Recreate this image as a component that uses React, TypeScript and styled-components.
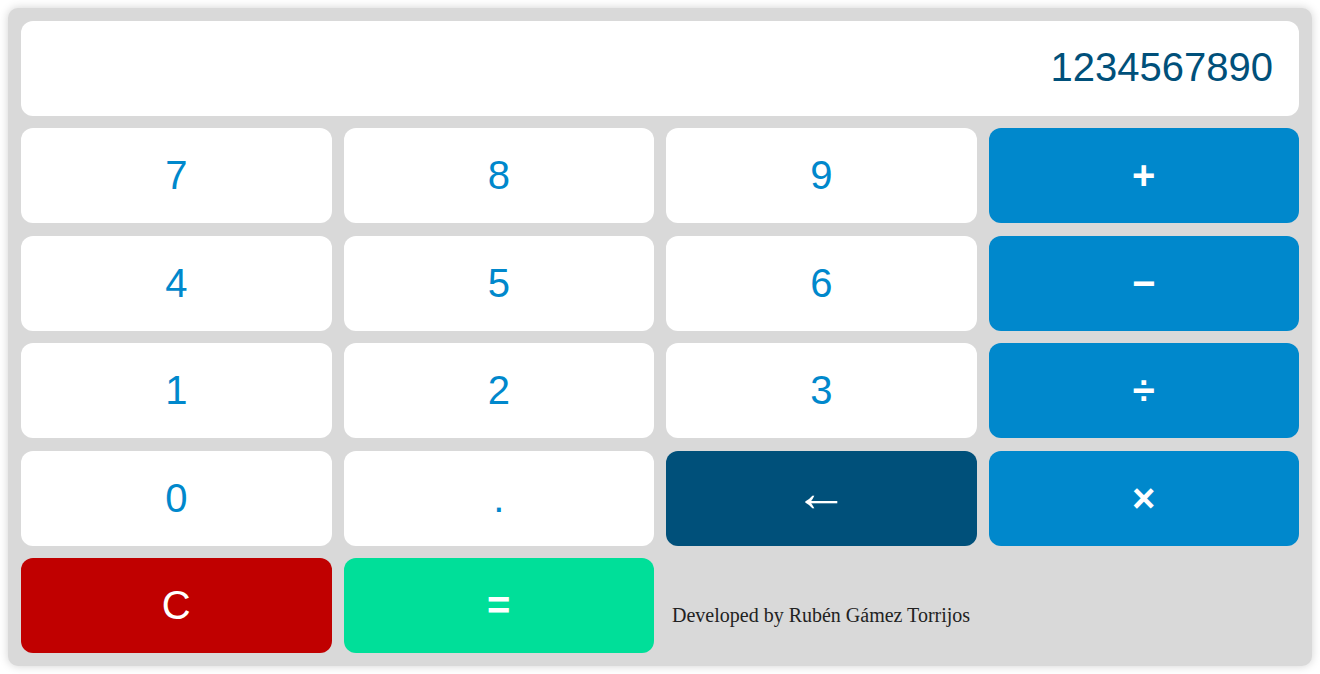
import React from "react";
import styled, { createGlobalStyle } from "styled-components";

const Global = createGlobalStyle`
  html, body { margin: 0; padding: 0; background: #ffffff; }
  body { padding: 8px; font-family: "Liberation Sans", Arial, sans-serif; }
`;

const Calculator = styled.div`
  width: 1304px;
  height: 658px;
  box-sizing: border-box;
  padding: 13px;
  background: #d9d9d9;
  border-radius: 10px;
  box-shadow: 0 0 10px rgba(0, 0, 0, 0.18);
  display: grid;
  grid-template-columns: repeat(4, 1fr);
  grid-template-rows: 94.5px repeat(5, 95px);
  row-gap: 12.5px;
  column-gap: 12px;
`;

const Display = styled.div`
  grid-column: 1 / -1;
  background: #ffffff;
  border-radius: 12px;
  display: flex;
  align-items: center;
  justify-content: flex-end;
  padding: 0 26px 2px;
  font-size: 40px;
  color: #00507a;
`;

type Variant = "digit" | "op" | "back" | "clear" | "equals";

const styles: Record<Variant, { bg: string; fg: string; weight: number; size: number; lift: number }> = {
  digit: { bg: "#ffffff", fg: "#0088cc", weight: 400, size: 40, lift: 0 },
  op: { bg: "#0088cc", fg: "#ffffff", weight: 700, size: 40, lift: 0 },
  back: { bg: "#00507a", fg: "#ffffff", weight: 400, size: 54, lift: 12 },
  clear: { bg: "#c00000", fg: "#ffffff", weight: 400, size: 40, lift: 0 },
  equals: { bg: "#00df99", fg: "#ffffff", weight: 700, size: 40, lift: 0 },
};

const Key = styled.button<{ $variant: Variant }>`
  border: none;
  margin: 0;
  padding: 0 0 ${(p) => styles[p.$variant].lift}px;
  border-radius: 12px;
  font-family: "Liberation Sans", Arial, sans-serif;
  font-size: ${(p) => styles[p.$variant].size}px;
  background: ${(p) => styles[p.$variant].bg};
  color: ${(p) => styles[p.$variant].fg};
  font-weight: ${(p) => styles[p.$variant].weight};
  display: flex;
  align-items: center;
  justify-content: center;
  cursor: pointer;
`;

const Credit = styled.div`
  display: flex;
  align-items: flex-end;
  padding: 0 0 26px 6px;
  font-family: "Liberation Serif", "Times New Roman", serif;
  font-size: 20px;
  color: #222222;
`;

const keys: { label: string; v: Variant }[] = [
  { label: "7", v: "digit" },
  { label: "8", v: "digit" },
  { label: "9", v: "digit" },
  { label: "+", v: "op" },
  { label: "4", v: "digit" },
  { label: "5", v: "digit" },
  { label: "6", v: "digit" },
  { label: "−", v: "op" },
  { label: "1", v: "digit" },
  { label: "2", v: "digit" },
  { label: "3", v: "digit" },
  { label: "÷", v: "op" },
  { label: "0", v: "digit" },
  { label: ".", v: "digit" },
  { label: "←", v: "back" },
  { label: "×", v: "op" },
  { label: "C", v: "clear" },
  { label: "=", v: "equals" },
];

export default function App() {
  return (
    <>
      <Global />
      <Calculator>
        <Display>1234567890</Display>
        {keys.map((k) => (
          <Key key={k.label} $variant={k.v}>
            {k.label}
          </Key>
        ))}
        <Credit>Developed by Rubén Gámez Torrijos</Credit>
      </Calculator>
    </>
  );
}
